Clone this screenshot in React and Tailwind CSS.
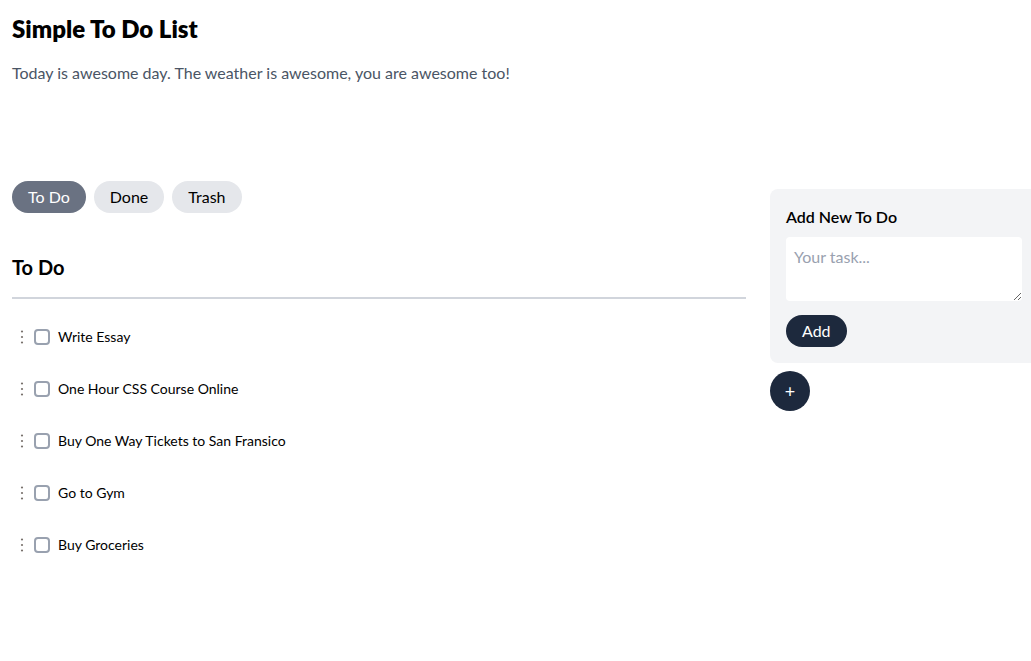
import { useState } from 'react';

const tasks = [
  'Write Essay',
  'One Hour CSS Course Online',
  'Buy One Way Tickets to San Fransico',
  'Go to Gym',
  'Buy Groceries',
];

function DragDots() {
  return (
    <svg width="4" height="16" viewBox="0 0 4 16" className="shrink-0">
      <circle cx="2" cy="2.5" r="1.1" fill="#78716c" />
      <circle cx="2" cy="8" r="1.1" fill="#78716c" />
      <circle cx="2" cy="13.5" r="1.1" fill="#78716c" />
    </svg>
  );
}

export default function App() {
  const [tab, setTab] = useState('To Do');

  return (
    <div className="min-h-screen w-full overflow-hidden bg-white text-black font-['Lato',sans-serif]">
      <div className="px-3 pt-[13px]">
        <h1 className="text-2xl font-extrabold leading-8">Simple To Do List</h1>
        <p className="mt-4 text-base text-gray-600">
          Today is awesome day. The weather is awesome, you are awesome too!
        </p>
      </div>

      <div className="flex gap-6 pl-3 mt-[96px]">
        <div className="w-[734px] shrink-0">
          <div className="flex gap-2">
            {['To Do', 'Done', 'Trash'].map((t) => (
              <button
                key={t}
                onClick={() => setTab(t)}
                className={
                  t === tab
                    ? 'h-8 px-4 rounded-full bg-gray-500 text-white text-base'
                    : 'h-8 px-4 rounded-full bg-gray-200 text-black text-base'
                }
              >
                {t}
              </button>
            ))}
          </div>

          <h2 className="mt-10 text-xl font-bold pb-4 border-b-2 border-gray-300">{tab}</h2>

          <ul className="mt-3">
            {tasks.map((task) => (
              <li key={task} className="flex items-center h-[52px] pl-2">
                <DragDots />
                <input
                  type="checkbox"
                  className="appearance-none ml-[10px] w-4 h-4 rounded border-2 border-gray-400 bg-white shrink-0"
                />
                <span className="ml-2 text-sm">{task}</span>
              </li>
            ))}
          </ul>
        </div>

        <div className="w-[268px] shrink-0 mt-2">
          <div className="bg-gray-100 rounded-lg p-4">
            <h3 className="text-base font-semibold">Add New To Do</h3>
            <textarea
              placeholder="Your task..."
              className="block mt-2 w-full h-16 rounded bg-white px-2 py-2 text-base placeholder-gray-400 outline-none"
            />
            <button className="mt-[14px] h-8 px-4 rounded-full bg-slate-800 text-white text-base">Add</button>
          </div>
          <button className="mt-2 w-10 h-10 rounded-full bg-slate-800 text-white text-lg flex items-center justify-center">
            +
          </button>
        </div>
      </div>
    </div>
  );
}
